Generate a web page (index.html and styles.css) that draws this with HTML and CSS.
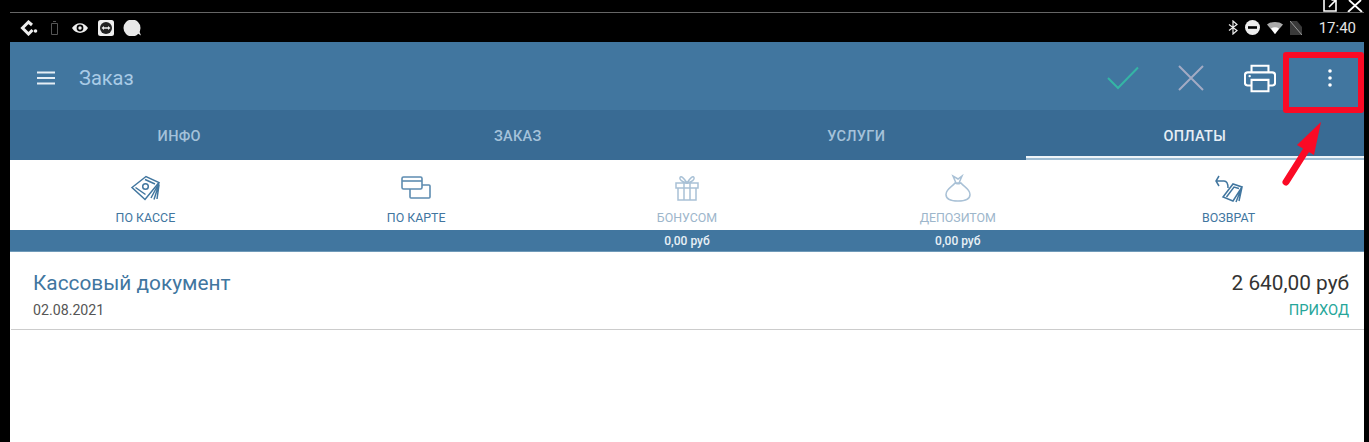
FILE: index.html
```html
<!DOCTYPE html>
<html lang="en">
<head>
    <meta charset="UTF-8">
    <title>Заказ</title>
    <link rel="stylesheet" href="styles.css">
</head>
<body>
    <div class="window-bar">
        <svg width="16" height="12" viewBox="0 0 16 12"><path d="M2 0v11h12V4M7 7l7-7M9.500 0H14v4" fill="none" stroke="#fff" stroke-width="1.600"/></svg>
        <svg width="16" height="12" viewBox="0 0 16 12"><path d="M2 0l6 5.500L14 0M1 12l7-6.500 7 6.500" fill="none" stroke="#fff" stroke-width="1.800"/></svg>
    </div>
    <div class="screen">
        <div class="status">
            <div class="status-left">
                <svg class="wide" width="18" height="16" viewBox="0 0 18 16"><path d="M12 5L8.500 2 2.500 8l6 6 4-4" fill="none" stroke="#eee" stroke-width="3"/><circle cx="15.500" cy="11" r="1.800" fill="#eee"/></svg>
                <svg class="wide" width="9" height="16" viewBox="0 0 9 16"><path d="M3 1.500h3M1.500 3.500h6v11h-6z" fill="none" stroke="#555" stroke-width="1"/></svg>
                <svg width="18" height="12" viewBox="0 0 18 12"><path d="M1 6c4-6.500 12-6.500 16 0-4 6.500-12 6.500-16 0z" fill="#eee"/><circle cx="9" cy="6" r="3.400" fill="#000"/><circle cx="9" cy="6" r="1.700" fill="#eee"/></svg>
                <svg width="16" height="16" viewBox="0 0 16 16"><rect width="16" height="16" rx="2.500" fill="#eee"/><circle cx="8" cy="8" r="6" fill="#222"/><path d="M3.500 8l2.500-2v1.300h4V6l2.500 2-2.500 2V8.700H6V10z" fill="#eee"/></svg>
                <svg width="18" height="16" viewBox="0 0 18 16"><circle cx="9" cy="8" r="8.500" fill="#e8e8e8"/><path d="M14 13l4 2.500-2-5z" fill="#e8e8e8"/></svg>
            </div>
            <div class="status-right">
                <svg width="10" height="15" viewBox="0 0 10 15"><path d="M1 4.500l8 6-4 3.500V1l4 3.500-8 6" fill="none" stroke="#eee" stroke-width="1.200"/></svg>
                <svg width="15" height="15" viewBox="0 0 15 15"><circle cx="7.500" cy="7.500" r="7.500" fill="#eee"/><rect x="3" y="6.200" width="9" height="2.600" fill="#000"/></svg>
                <svg width="16" height="12" viewBox="0 0 16 12"><path d="M0 2.500C4-.8 12-.8 16 2.500L8 12z" fill="#aaa"/><path d="M4 6.500c2.300-1.600 5.700-1.600 8 0L8 12z" fill="#fff"/></svg>
                <svg width="12" height="14" viewBox="0 0 12 14"><path d="M0 0h7l5 6v8H0z" fill="#3a3a3a"/><path d="M0 0l12 14" stroke="#999" stroke-width="1"/></svg>
                <span class="clock">17:40</span>
            </div>
        </div>
        <div class="toolbar">
            <svg width="18" height="14" viewBox="0 0 18 14"><path d="M0 1.500h18M0 7h18M0 12.500h18" stroke="#e6eef5" stroke-width="2"/></svg>
            <span class="toolbar-title">Заказ</span>
            <div class="toolbar-actions">
                <svg width="32" height="24" viewBox="0 0 32 24"><path d="M1 12l10 10L31 1.500" fill="none" stroke="#35b5a5" stroke-width="2"/></svg>
                <svg class="cancel" width="26" height="26" viewBox="0 0 26 26"><path d="M1 1l24 24M25 1L1 25" fill="none" stroke="#a3abc4" stroke-width="2"/></svg>
                <svg class="printer" width="32" height="30" viewBox="0 0 34 30"><path d="M8 9V2h18v7M8 23H4a3 3 0 0 1-3-3V12a3 3 0 0 1 3-3h26a3 3 0 0 1 3 3v8a3 3 0 0 1-3 3h-4M8 17h18v12H8z" fill="none" stroke="#fff" stroke-width="2.200"/><circle cx="6" cy="13" r="1.300" fill="#fff"/></svg>
                <svg class="dots" width="4" height="18" viewBox="0 0 4 18"><circle cx="2" cy="2" r="1.800" fill="#fff"/><circle cx="2" cy="9" r="1.800" fill="#fff"/><circle cx="2" cy="16" r="1.800" fill="#fff"/></svg>
            </div>
        </div>
        <div class="tabs">
            <div class="tab">ИНФО</div>
            <div class="tab">ЗАКАЗ</div>
            <div class="tab">УСЛУГИ</div>
            <div class="tab active">ОПЛАТЫ</div>
        </div>
        <div class="actions">
            <div class="action">
                <svg width="30" height="26" viewBox="0 0 30 26"><g fill="none" stroke="#41769f" stroke-width="1.500"><path d="M2 12.500L16 1.500l13 6L15 24.500z"/><path d="M5.500 12.500l10 7M15 4.500l10 4.500"/><circle cx="15.500" cy="11.500" r="2.800"/><path d="M29 8l-8 15M29 9l-5 15.500M29 10l-2 14"/></g></svg>
                <span>ПО КАССЕ</span>
            </div>
            <div class="action">
                <svg width="30" height="24" viewBox="0 0 30 24"><g fill="none" stroke="#5d8cb1" stroke-width="1.600"><rect x="1" y="1" width="20" height="12" rx="1.500"/><path d="M1 5h20"/><path d="M21 9h7a1 1 0 0 1 1 1v11a1 1 0 0 1-1 1H10a1 1 0 0 1-1-1v-8"/></g></svg>
                <span>ПО КАРТЕ</span>
            </div>
            <div class="action faded">
                <svg width="24" height="26" viewBox="0 0 24 26"><g fill="none" stroke="#a9c1d6" stroke-width="1.500"><path d="M1 8h22v5H1zM3 13v12h18V13M9 8v17M15 8v17M12 8C9 3 6 .5 5 2.500S7 7 12 8zM12 8c3-5 6-7.500 7-5.500S17 7 12 8z"/></g></svg>
                <span>БОНУСОМ</span>
            </div>
            <div class="action faded">
                <svg width="26" height="28" viewBox="0 0 26 28"><g fill="none" stroke="#a9c1d6" stroke-width="1.500"><path d="M10 9c-3 4-9 6-9 11.500 0 4 4 6.500 12 6.500s12-2.500 12-6.500C25 15 19 13 16 9z"/><path d="M10 9c1 .8 4 .8 6 0M11 9L8 2l5 3 4-3-3 7"/></g></svg>
                <span>ДЕПОЗИТОМ</span>
            </div>
            <div class="action">
                <svg width="30" height="30" viewBox="0 0 30 30"><g fill="none" stroke="#41769f" stroke-width="1.500"><path d="M5 3L2 8l3 5M2 8h8c3 0 4 3 4 7"/><path d="M9 24l10-13 9 3-9 14zM12.500 24l7.500-10 5 1.500M28 14l-3 14M28 14l-6 15"/></g></svg>
                <span>ВОЗВРАТ</span>
            </div>
        </div>
        <div class="totals">
            <span></span>
            <span></span>
            <span>0,00 руб</span>
            <span>0,00 руб</span>
            <span></span>
        </div>
        <div class="doc-row">
            <div>
                <div class="doc-title">Кассовый документ</div>
                <div class="doc-date">02.08.2021</div>
            </div>
            <div class="doc-right">
                <div class="doc-sum">2 640,00 руб</div>
                <div class="doc-type">ПРИХОД</div>
            </div>
        </div>
    </div>
    <div class="mark-box"></div>
    <svg class="mark-arrow" width="50" height="72" viewBox="0 0 50 72"><path d="M4 62L28 24" stroke="#fb0a25" stroke-width="7" stroke-linecap="round" fill="none"/><path d="M39 2L15 25l17 10z" fill="#fb0a25"/></svg>
</body>
</html>
```
FILE: styles.css
```css
*
{
    box-sizing: border-box;
}
body
{
    margin: 0;
    height: 442px;
    overflow: hidden;
    background: #000;
    font-family: Roboto, "Liberation Sans", sans-serif;
}
.window-bar
{
    height: 12px;
    display: flex;
    justify-content: flex-end;
    gap: 9px;
    padding-right: 6px;
    overflow: hidden;
}
.screen
{
    margin-left: 10px;
    width: 1354px;
    border-top: 1px solid #666;
    background: #fff;
    height: 430px;
}
.status
{
    height: 29px;
    background: #000;
    display: flex;
    align-items: center;
    justify-content: space-between;
    padding: 0 8px 0 10px;
}
.status-left, .status-right
{
    display: flex;
    align-items: center;
}
.status-left
{
    gap: 9px;
}
.status-left .wide
{
    margin-right: 3px;
}
.status-right
{
    gap: 7px;
}
.clock
{
    color: #e4e4e4;
    font-size: 15px;
    margin-left: 10px;
}
.toolbar
{
    height: 68px;
    background: #41769f;
    display: flex;
    align-items: center;
    padding: 4px 32px 0 27px;
}
.toolbar-title
{
    color: #a9cbe6;
    font-size: 20px;
    margin-left: 24px;
}
.toolbar-actions
{
    margin-left: auto;
    display: flex;
    align-items: center;
}
.cancel
{
    margin-left: 39px;
}
.printer
{
    margin-left: 40px;
}
.dots
{
    margin-left: 52px;
}
.tabs
{
    height: 50px;
    background: #396b94;
    display: flex;
}
.tab
{
    flex: 1;
    display: flex;
    align-items: center;
    justify-content: center;
    color: #a5c2da;
    font-size: 14.500px;
    font-weight: 500;
    letter-spacing: 0.300px;
    padding-top: 2px;
}
.tab.active
{
    color: #e6eef5;
    border-bottom: 2px solid #9dbcd3;
    box-shadow: inset 0 -2px 0 #eef4f8;
    padding-top: 4px;
}
.actions
{
    height: 70px;
    display: flex;
}
.action
{
    flex: 1;
    display: flex;
    flex-direction: column;
    align-items: center;
    gap: 7px;
    padding: 12px 0 5px;
    color: #41769f;
    font-size: 12.400px;
    line-height: 14px;
}
.action svg
{
    margin: auto 0;
}
.action.faded
{
    color: #9db6cb;
}
.totals
{
    height: 22px;
    background: #41769f;
    border-bottom: 1px solid #6f9ab9;
    display: flex;
    align-items: center;
    padding-top: 1px;
}
.totals span
{
    flex: 1;
    text-align: center;
    color: #e8f0f6;
    font-size: 12px;
    font-weight: 500;
}
.doc-row
{
    height: 78px;
    margin-left: 1px;
    padding: 19px 15px 0 22px;
    display: flex;
    justify-content: space-between;
    border-bottom: 1px solid #ccc;
}
.doc-title
{
    color: #41769f;
    font-size: 20.800px;
    line-height: 24px;
}
.doc-date
{
    color: #555;
    font-size: 14.200px;
    line-height: 16px;
    margin-top: 7px;
}
.doc-right
{
    text-align: right;
}
.doc-sum
{
    color: #333;
    font-size: 20.800px;
    line-height: 24px;
}
.doc-type
{
    color: #26a69a;
    font-size: 14.700px;
    line-height: 16px;
    margin-top: 7px;
}
/* red marks drawn over the screenshot */
.mark-box
{
    position: absolute;
    left: 1283px;
    top: 52px;
    width: 81px;
    height: 61px;
    border: 6px solid #fb0a25;
    border-radius: 3px;
}
.mark-arrow
{
    position: absolute;
    left: 1282px;
    top: 120px;
}
```
